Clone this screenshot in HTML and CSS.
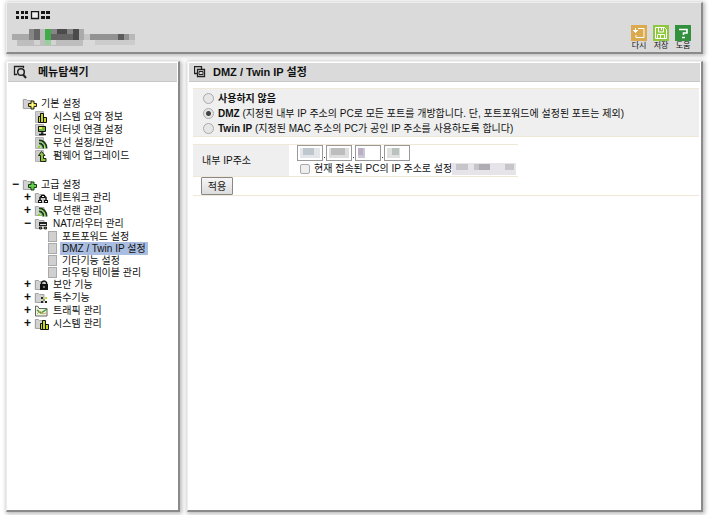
FILE: index.html
```html
<!DOCTYPE html>
<html lang="ko">
<head>
<meta charset="utf-8">
<title>DMZ / Twin IP 설정</title>
<link rel="stylesheet" href="styles.css">
</head>
<body>
<svg class="defs" aria-hidden="true">
  <defs>
    <g id="sheet"><path d="M1.500.5h8v11h-8z" fill="#cdcdcd" stroke="#b2b2b2"/></g>
    <g id="folder"><path d="M1.500 10.500v-9h3l1 1h4.500v8z" fill="#d2d2d2" stroke="#a4a4a4"/><path d="M.5 1v10" stroke="#eee"/></g>
    <g id="bars"><path d="M4.500 5.500h2v6h-2zM6.500 2.500h3v9h-3zM9.500 6.500h3v5h-3z" fill="#c8d820" stroke="#111"/></g>
    <g id="waves" fill="none"><path d="M5 3.500q7 0 7.500 8M5 6.500q4 0 4.500 5" stroke="#1d3a1b" stroke-width="2"/><path d="M5 4.500q6 0 6.500 7M5 7.500q3 0 3.500 4" stroke="#7ccf4a"/><path d="M4 9h2v2H4z" fill="#8bcf3a"/></g>
  </defs>
</svg>
<header class="panel top">
  <div class="brand">
    <svg class="logo" width="36" height="9" viewBox="0 0 36 9" role="img" aria-label="logo"><path d="M0 0h3v3H0zM5 0h3v3H5zM9 0h3v3H9zM0 5h3v3H0zM5 5h3v3H5zM9 5h3v3H9zM25 0h4v3h-4zM30 0h4v3h-4zM25 5h4v3h-4zM30 5h4v3h-4z" fill="#161616"/><path d="M15.500.5h7v7h-7z" fill="#eee" stroke="#161616" stroke-width="1.300"/></svg>
    <svg class="product" width="123" height="17" viewBox="0 0 123 17" aria-hidden="true">
      <path d="M0 5h17v6H0z" fill="#aaa"/><path d="M5 11h66v6H5z" fill="#bebebe"/><path d="M17 0h51v11H17z" fill="#858585"/><path d="M22 0h6v11h-6zM39 5h28v6H39z" fill="#656565"/><path d="M45 0h10v5H45zM61 0h6v11h-6z" fill="#4b4b4b"/><path d="M28 0h5v11h-5z" fill="#bbb"/><path d="M33 0h6v11h-6z" fill="#40ab48"/><path d="M33 11h6v5h-6z" fill="#98cf9c"/><path d="M22 11h6v5h-6zM39 11h5v5h-5z" fill="#d2d2d2"/><path d="M67 0h5v11h-5z" fill="#aaa"/><path d="M72 5h6v6h-6z" fill="#c5c5c5"/><path d="M78 5h45v6H78z" fill="#929292"/><path d="M106 5h6v6h-6z" fill="#5b5b5b"/><path d="M117 5h6v6h-6z" fill="#b9b9b9"/><path d="M83 11h40v5H83z" fill="#ccc"/>
    </svg>
  </div>
  <nav class="tools">
    <button type="button"><svg width="16" height="16" viewBox="0 0 16 16" aria-hidden="true"><path d="M0 0h16v16H0z" fill="#dba94e"/><path d="M7 3.500h6v9H5V10M4.500 3v5M2 5.500h5M3 6.500h3" fill="none" stroke="#fff"/></svg><span>다시</span></button>
    <button type="button"><svg width="16" height="16" viewBox="0 0 16 16" aria-hidden="true"><path d="M0 0h16v16H0z" fill="#8fc740"/><path d="M2.500 2.500h9l2 2v9h-11zM5.500 3v4h5V3M4.500 13V9.500h7V13M8.500 3v2M7.500 10v3" fill="none" stroke="#fff"/></svg><span>저장</span></button>
    <button type="button"><svg width="16" height="16" viewBox="0 0 16 16" aria-hidden="true"><path d="M0 0h16v16H0z" fill="#33913d"/><path d="M4 4.500h8v3.500H8.500v2M7 12.500h3" fill="none" stroke="#fff" stroke-width="1.600"/></svg><span>도움</span></button>
  </nav>
</header>
<div class="columns">
  <aside class="panel side">
    <h2 class="bar"><svg width="14" height="14" viewBox="0 0 14 14" aria-hidden="true"><path d="M4 9.500H1.500v-8h9V3" fill="none" stroke="#222" stroke-width="1.300"/><circle cx="8" cy="7" r="3.300" fill="#ddd" stroke="#222" stroke-width="1.500"/><path d="M10 9.500l3 3.500" stroke="#222" stroke-width="2"/></svg><span>메뉴탐색기</span></h2>
    <ul class="tree">
      <li><div class="row"><span class="mark"></span><svg viewBox="0 0 15 12"><use href="#folder"/><path d="M9 3h3v2.500h2.500v3H12V11H9V8.500H6.500v-3H9z" fill="#e8d43c" stroke="#222"/><path d="M10.500 5v4M8.500 7h4" stroke="#fffbb0"/></svg><a href="#basic">기본 설정</a></div>
        <ul>
          <li class="row"><span class="mark"></span><svg viewBox="0 0 15 12"><use href="#sheet"/><use href="#bars"/></svg><a href="#summary">시스템 요약 정보</a></li>
          <li class="row"><span class="mark"></span><svg viewBox="0 0 15 12"><use href="#sheet"/><path d="M4.500 2.500h7v5h-7z" fill="#6fb53c" stroke="#111"/><path d="M8 8v2M5 10.500h7" stroke="#111" stroke-width="1.500"/><path d="M5 3h3v2H5z" fill="#ece85a"/></svg><a href="#internet">인터넷 연결 설정</a></li>
          <li class="row"><span class="mark"></span><svg viewBox="0 0 15 12"><use href="#sheet"/><use href="#waves"/></svg><a href="#wireless">무선 설정/보안</a></li>
          <li class="row"><span class="mark"></span><svg viewBox="0 0 15 12"><use href="#sheet"/><path d="M7.500 1.500l3.500 4H9.500v3h2.500v3H6.500v-6h-2z" fill="#8fc93a" stroke="#222"/></svg><a href="#firmware">펌웨어 업그레이드</a></li>
        </ul>
      </li>
      <li><div class="row"><span class="mark">−</span><svg viewBox="0 0 15 12"><use href="#folder"/><path d="M9 3h3v2.500h2.500v3H12V11H9V8.500H6.500v-3H9z" fill="#65ca4c" stroke="#163c13"/></svg><a href="#advanced">고급 설정</a></div>
        <ul>
          <li class="row"><span class="mark">+</span><svg viewBox="0 0 15 12"><use href="#folder"/><path d="M6 9V5.500l2-2h2l2 2V9" fill="none" stroke="#111" stroke-width="1.500"/><path d="M7 3h4v3H7zM4 8h4v3H4zM10 8h4v3h-4z" fill="#111"/><path d="M8 4h2v1H8zM5 9h2v1H5zM11 9h2v1h-2z" fill="#eee"/></svg><a href="#network">네트워크 관리</a></li>
          <li class="row"><span class="mark">+</span><svg viewBox="0 0 15 12"><use href="#folder"/><use href="#waves"/></svg><a href="#wlan">무선랜 관리</a></li>
          <li><div class="row"><span class="mark">−</span><svg viewBox="0 0 15 12"><use href="#folder"/><path d="M5 4h8v4H5z" fill="#222"/><path d="M6 6.500h6" stroke="#ddd"/><path d="M5.500 9h2v2h-2zM10.500 9h2v2h-2z" fill="#719b3e" stroke="#222"/></svg><a href="#nat">NAT/라우터 관리</a></div>
            <ul class="leaves">
              <li class="row"><i class="page"></i><a href="#forward">포트포워드 설정</a></li>
              <li class="row"><i class="page"></i><a class="current" href="#dmz" aria-current="page">DMZ / Twin IP 설정</a></li>
              <li class="row"><i class="page"></i><a href="#misc">기타기능 설정</a></li>
              <li class="row"><i class="page"></i><a href="#routing">라우팅 테이블 관리</a></li>
            </ul>
          </li>
          <li class="row"><span class="mark">+</span><svg viewBox="0 0 15 12"><use href="#folder"/><path d="M6 5h8v6H6z" fill="#111"/><path d="M7.500 6V3.500q2.500-3 5 0V6" fill="none" stroke="#111" stroke-width="1.500"/><path d="M9.500 7h1v2h-1z" fill="#ddd"/></svg><a href="#security">보안 기능</a></li>
          <li class="row"><span class="mark">+</span><svg viewBox="0 0 15 12"><use href="#folder"/><path d="M7 5h2v2H7zM11 9h2v2h-2zM7 9h2v2H7z" fill="#222"/><path d="M11 5h2v2h-2z" fill="#c7d832"/><path d="M9 7h2v2H9z" fill="#84a948"/></svg><a href="#special">특수기능</a></li>
          <li class="row"><span class="mark">+</span><svg viewBox="0 0 15 12"><path d="M1.500 1v10H13V3.500H5L4 1.500z" fill="#eef3dc" stroke="#666"/><path d="M3 5l4 3 6-4" fill="none" stroke="#3b9d39" stroke-width="1.500"/><path d="M3 9l3-3 3 3 3-1" fill="none" stroke="#d8a25f"/></svg><a href="#traffic">트래픽 관리</a></li>
          <li class="row"><span class="mark">+</span><svg viewBox="0 0 15 12"><use href="#folder"/><use href="#bars" x="2"/></svg><a href="#system">시스템 관리</a></li>
        </ul>
      </li>
    </ul>
  </aside>
  <main class="panel content">
    <h1 class="bar"><svg width="12" height="12" viewBox="0 0 12 12" aria-hidden="true"><path d="M3 7.500H.5v-7h7V3M3.500 3.500h7v7h-7z" fill="none" stroke="#222" stroke-width="1.300"/><path d="M5 5.500h4v3H5z" fill="none" stroke="#222"/></svg><span>DMZ / Twin IP 설정</span></h1>
    <form>
      <fieldset class="modes">
        <label><input type="radio" name="mode"><span><b>사용하지 않음</b></span></label>
        <label><input type="radio" name="mode" checked><span><b>DMZ</b> (지정된 내부 IP 주소의 PC로 모든 포트를 개방합니다. 단, 포트포워드에 설정된 포트는 제외)</span></label>
        <label><input type="radio" name="mode"><span><b>Twin IP</b> (지정된 MAC 주소의 PC가 공인 IP 주소를 사용하도록 합니다)</span></label>
      </fieldset>
      <div class="address">
        <div class="name" id="ip-name">내부 IP주소</div>
        <div class="value">
          <div class="octets" role="group" aria-labelledby="ip-name">
            <div class="octet"><input type="text" aria-label="IP 1"><svg width="20" height="10" aria-hidden="true"><path d="M0 0h20v10H0z" fill="#e3e5e8"/><path d="M3 0h11v7H3z" fill="#bdc7cd"/></svg></div><i class="dot"></i>
            <div class="octet"><input type="text" aria-label="IP 2"><svg width="20" height="10" aria-hidden="true"><path d="M0 0h20v10H0z" fill="#dedede"/><path d="M2 0h14v7H2z" fill="#bcbebd"/></svg></div><i class="dot"></i>
            <div class="octet"><input type="text" aria-label="IP 3"><svg width="20" height="10" aria-hidden="true"><path d="M0 0h7v10H0z" fill="#cdc7d5"/><path d="M0 0h5v7H0z" fill="#b8b0c2"/></svg></div><i class="dot"></i>
            <div class="octet"><input type="text" aria-label="IP 4"><svg width="20" height="10" aria-hidden="true"><path d="M0 0h13v10H0z" fill="#dfe0df"/><path d="M5 0h7v7H5z" fill="#b9c3bd"/></svg></div>
          </div>
          <label class="mine"><input type="checkbox"><span>현재 접속된 PC의 IP 주소로 설정</span><svg width="64" height="12" aria-hidden="true"><path d="M0 0h64v12H0z" fill="#e6e4e9"/><path d="M4 1h12v6H4zM22 1h16v6H22zM53 1h9v6h-9z" fill="#c6c5ca"/><path d="M27 1h11v6H27z" fill="#aeadb3"/></svg></label>
        </div>
      </div>
      <div class="actions"><button type="submit">적용</button></div>
    </form>
  </main>
</div>
</body>
</html>
```
FILE: styles.css
```css
* { box-sizing: border-box; }
body {
  margin: 0;
  padding: 2px 17px 3px 6px;
  min-height: 100vh;
  display: flex;
  flex-direction: column;
  gap: 7px;
  background: #fff;
  color: #111;
  font: 10px/13px "Liberation Sans", "Noto Sans CJK KR", sans-serif;
}
.defs { position: absolute; width: 0; height: 0; }
ul { list-style: none; margin: 0; padding: 0; }
a { color: inherit; text-decoration: none; }
input, button { font: inherit; color: inherit; margin: 0; }
.panel {
  background: #fff;
  border: 1px solid #eee;
  border-right: 2px solid #8a8a8a;
  border-bottom: 2px solid #8a8a8a;
  box-shadow: 1px 1px 4px 1px #bbb;
}
.top {
  display: flex;
  justify-content: space-between;
  background: #dadada;
}
.brand { display: flex; flex-direction: column; gap: 9px; padding: 8px 5px 6px; }
.logo { margin-left: 4px; }
.tools { display: flex; gap: 6px; padding: 22px 10px 0 0; }
.tools button {
  display: flex;
  flex-direction: column;
  align-items: center;
  width: 16px;
  padding: 0;
  border: 0;
  background: none;
  font-size: 8px;
  line-height: 10px;
  white-space: nowrap;
}
.columns { flex: 1; display: flex; gap: 7px; }
.side { flex: 0 0 174px; padding: 1px; }
.content { flex: 1; min-width: 0; padding: 1px; }
.bar {
  display: flex;
  align-items: center;
  gap: 11px;
  height: 19px;
  margin: 0;
  padding: 0 5px;
  background: #dadada;
  border-bottom: 1px solid #c8c8c8;
  font-size: 11px;
  line-height: 18px;
}
.content .bar { gap: 7px; }
.tree { display: flex; flex-direction: column; gap: 16px; padding: 15px 0 0 2px; }
.tree ul { padding-left: 12px; }
.row { display: flex; align-items: center; height: 13px; white-space: nowrap; }
.row svg { width: 15px; height: 12px; margin-right: 4px; flex: none; }
.mark { width: 12px; padding-left: 2px; font-size: 12px; font-weight: bold; flex: none; }
.tree .leaves { padding-left: 26px; }
.leaves .row { height: 12px; }
.page { width: 9px; height: 11px; margin-right: 3px; background: #d0d0d0; border: 1px solid #aaa; }
.leaves a { padding: 0 2px; }
.current { background: #a9bde0; }
form { padding: 6px 1px 0 4px; }
.modes {
  min-width: 0;
  margin: 0 0 7px;
  padding: 2px 10px 0;
  border: solid #efe8d8;
  border-width: 1px 0;
  background: #efefef;
}
.modes label { display: flex; align-items: center; gap: 4px; height: 15px; }
input[type="radio"] {
  appearance: none;
  flex: none;
  width: 11px;
  height: 11px;
  border: 1px solid #aaa;
  border-radius: 50%;
  background: #e6e6e6;
}
input[type="radio"]:checked { background: radial-gradient(circle, #444 2px, #e6e6e6 3px); }
input[type="checkbox"] {
  appearance: none;
  flex: none;
  width: 10px;
  height: 10px;
  border: 1px solid #aaa;
  border-radius: 2px;
  background: #eee;
}
.address {
  display: grid;
  grid-template-columns: 96px 229px;
  width: max-content;
  border: solid #efe8d8;
  border-width: 1px 0;
}
.name { display: flex; align-items: center; padding-left: 9px; background: #efefef; }
.value { padding: 0 8px; }
.octets { display: flex; align-items: flex-end; gap: 1px; }
.dot { width: 1px; height: 1px; margin-bottom: 3px; background: #333; }
.octet { position: relative; }
.octet input { display: block; width: 26px; height: 16px; border: 1px solid #999; background: #fff; }
.octet svg { position: absolute; left: 3px; top: 3px; }
.mine { display: flex; align-items: center; height: 15px; padding-left: 3px; white-space: nowrap; }
.mine input { margin-right: 4px; }
.mine svg { flex: none; }
.actions { padding: 0 8px; border-bottom: 1px solid #efe8d8; }
.actions button {
  display: block;
  width: 32px;
  height: 18px;
  padding: 0;
  border: 1px solid #888;
  border-radius: 1px;
  background: linear-gradient(#f6f6f6, #dcdcdc);
}
```
